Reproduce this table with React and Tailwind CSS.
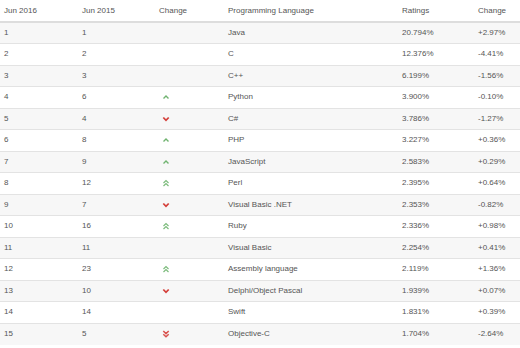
import React from "react";

const rows = [
  ["1", "1", null, "Java", "20.794%", "+2.97%"],
  ["2", "2", null, "C", "12.376%", "-4.41%"],
  ["3", "3", null, "C++", "6.199%", "-1.56%"],
  ["4", "6", "up", "Python", "3.900%", "-0.10%"],
  ["5", "4", "down", "C#", "3.786%", "-1.27%"],
  ["6", "8", "up", "PHP", "3.227%", "+0.36%"],
  ["7", "9", "up", "JavaScript", "2.583%", "+0.29%"],
  ["8", "12", "up2", "Perl", "2.395%", "+0.64%"],
  ["9", "7", "down", "Visual Basic .NET", "2.353%", "-0.82%"],
  ["10", "16", "up2", "Ruby", "2.336%", "+0.98%"],
  ["11", "11", null, "Visual Basic", "2.254%", "+0.41%"],
  ["12", "23", "up2", "Assembly language", "2.119%", "+1.36%"],
  ["13", "10", "down", "Delphi/Object Pascal", "1.939%", "+0.07%"],
  ["14", "14", null, "Swift", "1.831%", "+0.39%"],
  ["15", "5", "down2", "Objective-C", "1.704%", "-2.64%"],
];

const Arrow = ({ kind }) => {
  if (!kind) return null;
  if (kind === "up")
    return (
      <svg width="8" height="6" viewBox="0 0 8 6" className="ml-[3px]">
        <path d="M1.5 4.5 L4 2 L6.5 4.5" fill="none" stroke="#6fb36f" strokeWidth="1.4" />
      </svg>
    );
  if (kind === "up2")
    return (
      <svg width="8" height="8" viewBox="0 0 8 8" className="ml-[3px]">
        <path d="M1.5 4 L4 1.5 L6.5 4 M1.5 7 L4 4.5 L6.5 7" fill="none" stroke="#7cbc7c" strokeWidth="1.2" />
      </svg>
    );
  if (kind === "down")
    return (
      <svg width="8" height="6" viewBox="0 0 8 6" className="ml-[3px]">
        <path d="M1.3 1.5 L4 4.3 L6.7 1.5" fill="none" stroke="#d43f3a" strokeWidth="1.8" />
      </svg>
    );
  return (
    <svg width="8" height="8" viewBox="0 0 8 8" className="ml-[3px]">
      <path d="M1.3 1 L4 3.6 L6.7 1 M1.3 4.2 L4 6.8 L6.7 4.2" fill="none" stroke="#d9534f" strokeWidth="1.5" />
    </svg>
  );
};

export default function App() {
  return (
    <div className="w-[520px] h-[348px] bg-white overflow-hidden font-['Liberation_Sans',Arial,sans-serif] text-[8px] text-[#555]">
      <table className="w-full table-fixed border-collapse">
        <colgroup>
          <col className="w-[78px]" />
          <col className="w-[77px]" />
          <col className="w-[69px]" />
          <col className="w-[174px]" />
          <col className="w-[76px]" />
          <col />
        </colgroup>
        <thead>
          <tr className="h-[22px] border-b-2 border-[#ddd]">
            {["Jun 2016", "Jun 2015", "Change", "Programming Language", "Ratings", "Change"].map((h, i) => (
              <th key={i} className="text-left font-normal pl-[4px] p-0 align-middle">
                {h}
              </th>
            ))}
          </tr>
        </thead>
        <tbody>
          {rows.map((r, i) => (
            <tr key={i} className={"h-[21.5px] border-t border-[#e3e3e3] " + (i % 2 === 0 ? "bg-[#f7f7f7]" : "bg-white")}>
              <td className="pl-[4px] p-0">{r[0]}</td>
              <td className="pl-[4px] p-0">{r[1]}</td>
              <td className="pl-[4px] p-0">
                <Arrow kind={r[2]} />
              </td>
              <td className="pl-[4px] p-0">{r[3]}</td>
              <td className="pl-[4px] p-0">{r[4]}</td>
              <td className="pl-[4px] p-0">{r[5]}</td>
            </tr>
          ))}
        </tbody>
      </table>
    </div>
  );
}
